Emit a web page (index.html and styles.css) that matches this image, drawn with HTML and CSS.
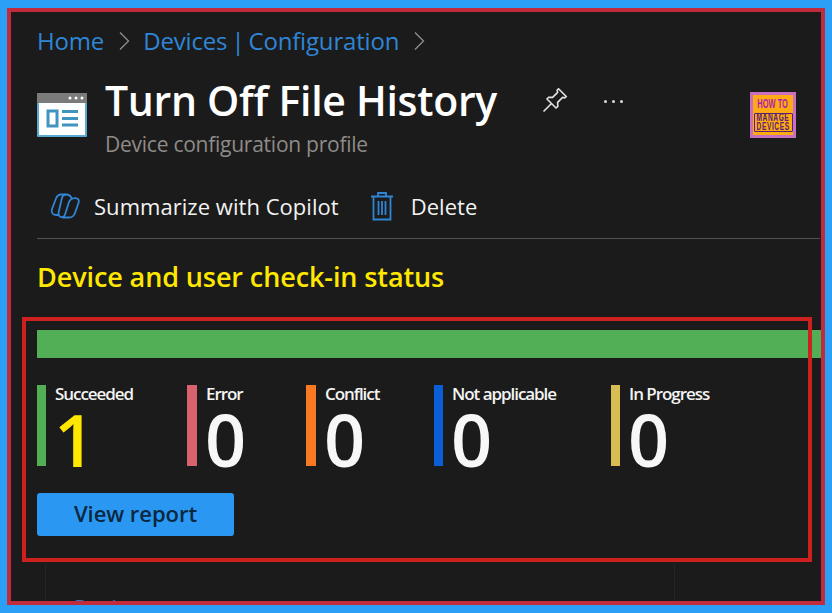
FILE: index.html
```html
<!DOCTYPE html>
<html lang="en">
<head>
<meta charset="utf-8">
<title>Turn Off File History</title>
<link rel="stylesheet" href="styles.css">
</head>
<body>
<main class="frame">
  <nav class="crumbs">
    <a class="crumb">Home</a>
    <svg class="chev" viewBox="0 0 12 20"><path d="M2 1.5 10.5 10 2 18.5"/></svg>
    <a class="crumb">Devices | Configuration</a>
    <svg class="chev" viewBox="0 0 12 20"><path d="M2 1.5 10.5 10 2 18.5"/></svg>
  </nav>
  <header class="head">
    <svg class="page-icon" viewBox="0 0 50 44">
      <rect width="50" height="44" rx="1" fill="#5aa9d0"/>
      <rect width="50" height="10" fill="#7b7b7b"/>
      <rect x="2" y="10" width="46" height="32" fill="#fff"/>
      <circle cx="33" cy="5" r="1.5" fill="#fff"/><circle cx="39" cy="5" r="1.5" fill="#fff"/><circle cx="45" cy="5" r="1.5" fill="#fff"/>
      <rect x="11" y="18" width="9" height="15" fill="none" stroke="#3f94c0" stroke-width="3"/>
      <path d="M25 18.5H41M25 25.5H41M25 32H41" stroke="#3f94c0" stroke-width="3"/>
    </svg>
    <div class="titles">
      <h1 class="title">Turn Off File History</h1>
      <p class="subtitle">Device configuration profile</p>
    </div>
    <svg class="pin" viewBox="0 0 26 26"><path d="M16.5 1.8 24.2 9.5 22.8 10.9 20.6 10.4 15.6 15.4 15.8 19.3 14 21 5 12 6.7 10.2 10.6 10.4 15.6 5.4 15.1 3.2Z M9 17 1.5 24.5"/></svg>
    <div class="more"><i></i><i></i><i></i></div>
    <div class="badge">
      <span class="badge-top">HOW TO</span>
      <span class="badge-box"><span class="badge-line">MANAGE</span><span class="badge-line">DEVICES</span></span>
    </div>
  </header>
  <div class="toolbar">
    <button class="tool">
      <svg class="tool-icon copilot" viewBox="0 0 30 28"><path d="M16 2.500H11C8.500 2.500 7 4 6 6.500L2 17C1 20 2.500 23 6 23H9"/><path d="M16 2.500C19 2.500 21 4 22 7"/><path d="M16 2.500C13.500 2.500 12.300 4.500 11.800 6.500L8.700 20C8 23.500 9.500 25.500 13 25.500H19C22 25.500 24 24 25 21L28.500 11C29.500 8 28 6 25 6.200C22 6.500 20 7 19 10L15.500 21C14.800 23.500 13.500 25.500 11.500 25.200"/></svg>
      <span>Summarize with Copilot</span>
    </button>
    <button class="tool">
      <svg class="tool-icon trash" viewBox="0 0 24 30"><path d="M1 5.500H23M8 5.500V2h8v3.500M3.500 5.500V28.500H20.500V5.500M8.500 10V24M12 10V24M15.500 10V24"/></svg>
      <span>Delete</span>
    </button>
  </div>
  <h2 class="section">Device and user check-in status</h2>
  <div class="bar"></div>
  <div class="stats">
    <div class="stat s1"><span class="key green"></span><div><div class="label">Succeeded</div><div class="num yellow">1</div></div></div>
    <div class="stat s2"><span class="key red"></span><div><div class="label">Error</div><div class="num">0</div></div></div>
    <div class="stat s3"><span class="key orange"></span><div><div class="label">Conflict</div><div class="num">0</div></div></div>
    <div class="stat s4"><span class="key blue"></span><div><div class="label">Not applicable</div><div class="num">0</div></div></div>
    <div class="stat s5"><span class="key gold"></span><div><div class="label">In Progress</div><div class="num">0</div></div></div>
  </div>
  <button class="report">View report</button>
  <div class="lower"><span class="lower-title">Device status</span></div>
  <div class="callout"></div>
</main>
</body>
</html>
```
FILE: styles.css
```css
* { box-sizing: border-box; }
html, body { margin: 0; height: 613px; overflow: hidden; }
body { background: #2b9ef6; padding: 8px 7px 8px 7px; font-family: "Open Sans", "Noto Sans", sans-serif; }
.frame { position: relative; height: 597px; border: 4px solid #c22b3c; background: #1b1b1b; padding: 0 0 0 26px; overflow: hidden; color: #fff; }
.crumbs { display: flex; align-items: center; height: 34px; margin-top: 11px; }
.crumb { font-size: 24px; color: #2f86d6; letter-spacing: -.17px; word-spacing: -2px; }
.chev { width: 12px; height: 20px; margin: 2px 13px 0 14px; fill: none; stroke: #8f8f8f; stroke-width: 1.300; }
.head { display: flex; align-items: flex-start; height: 122px; }
.page-icon { width: 50px; height: 44px; margin-top: 36px; flex: none; }
.titles { margin-left: 18px; padding-top: 15px; width: 437px; flex: none; }
.title { margin: 0; font-size: 41px; line-height: 57px; font-weight: 600; color: #fff; letter-spacing: -.3px; white-space: nowrap; }
.subtitle { margin: 0; font-size: 21px; line-height: 30px; color: #8f8b88; letter-spacing: -.25px; white-space: nowrap; }
.pin { width: 26px; height: 26px; margin-top: 30px; fill: none; stroke: #e2e2e2; stroke-width: 1.600; flex: none; }
.more { display: flex; gap: 5px; margin: 43px 0 0 36px; width: 146px; flex: none; }
.more i { width: 3px; height: 3px; border-radius: 50%; background: #ddd; }
.badge { width: 46px; height: 46px; margin-top: 35px; flex: none; background: #fdaa13; border: 3px solid #c86fc0; display: flex; flex-direction: column; align-items: center; font-family: "Liberation Sans", sans-serif; font-weight: 700; }
.badge-top { font-size: 12.500px; line-height: 12px; margin-top: 3px; color: #b01fa8; white-space: nowrap; transform: scaleX(.6); }
.badge-box { display: flex; flex-direction: column; align-items: center; justify-content: center; margin-top: 3px; border: 1px solid #5a1d78; border-radius: 1px; color: #5a1d78; width: 39px; height: 19px; }
.badge-line { font-size: 10px; line-height: 8.500px; letter-spacing: .9px; white-space: nowrap; transform: scaleX(.66); }
.toolbar { display: flex; align-items: center; height: 60px; margin-right: 1px; padding: 0 0 5px 13px; border-bottom: 1px solid #525252; gap: 31px; }
.tool { display: flex; align-items: center; gap: 14px; padding: 0; background: none; border: 0; color: #f2f2f2; font: inherit; font-size: 22px; letter-spacing: .04px; white-space: nowrap; }
.tool:last-child { gap: 17px; }
.tool-icon { fill: none; stroke: #2f86d6; stroke-width: 1.800; flex: none; }
.copilot { width: 30px; height: 28px; }
.trash { width: 24px; height: 30px; }
.section { margin: 20px 0 0; font-size: 27px; line-height: 36px; font-weight: 600; color: #ffe800; letter-spacing: -.1px; white-space: nowrap; }
.bar { height: 28px; background: #52af55; margin-top: 35px; }
.stats { position: relative; display: flex; height: 81px; margin-top: 27px; }
.stat { display: flex; flex: none; }
.s1 { width: 150px; } .s2 { width: 119px; } .s3 { width: 128px; } .s4 { width: 177px; }
.key { width: 9px; height: 81px; flex: none; margin-right: 9px; }
.s2 .key, .s3 .key { width: 10px; }
.green { background: #52af55; } .red { background: #d9626f; } .orange { background: #f97a22; } .blue { background: #0b5fd6; } .gold { background: #d8bd52; }
.label { font-size: 17px; line-height: 20px; margin-top: -1px; font-weight: 600; letter-spacing: -1.050px; color: #f4f4f4; white-space: nowrap; }
.num { font-size: 72px; line-height: 62px; font-weight: 600; color: #f7f7f7; margin-top: 4px; margin-left: -1px; }
.yellow { color: #ffe800; }
.report { display: block; width: 197px; height: 43px; margin-top: 27px; padding: 0 0 4px; border: 0; border-radius: 3px; background: #2a98f2; color: #0c2740; font: inherit; font-size: 22px; font-weight: 600; letter-spacing: -.05px; }
.lower { width: 630px; height: 60px; margin: 29px 0 0 8px; border-left: 1px solid #262626; border-right: 1px solid #262626; padding: 21px 0 0 28px; }
.lower-title { color: #2f74c6; font-size: 21px; line-height: 44px; }
.callout { position: absolute; left: 11px; top: 305px; width: 790px; height: 245px; border: 4px solid #cf2020; pointer-events: none; }
```
